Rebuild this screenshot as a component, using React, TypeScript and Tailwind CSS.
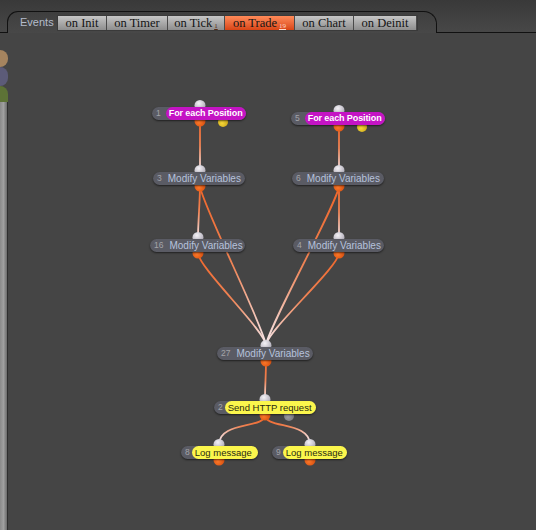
import React from "react";

type Kind = "gray" | "magenta" | "yellow";

interface FlowNode {
    id: string;
    label: string;
    kind: Kind;
    left: number;
    top: number;
    width: number;
    port: number; // x of in/out ports
    extra?: { x: number; color: "yellow" | "gray" };
}

// page coordinates, the canvas starts at (8, 33)
const OX = 8;
const OY = 33;
const H = 13;

const nodes: FlowNode[] = [
    { id: "1", label: "For each Position", kind: "magenta", left: 152, top: 107, width: 94, port: 200, extra: { x: 223, color: "yellow" } },
    { id: "5", label: "For each Position", kind: "magenta", left: 291, top: 112, width: 94, port: 339, extra: { x: 362, color: "yellow" } },
    { id: "3", label: "Modify Variables", kind: "gray", left: 153, top: 172, width: 92, port: 200 },
    { id: "6", label: "Modify Variables", kind: "gray", left: 292, top: 172, width: 92, port: 339 },
    { id: "16", label: "Modify Variables", kind: "gray", left: 150, top: 239, width: 95, port: 198 },
    { id: "4", label: "Modify Variables", kind: "gray", left: 293, top: 239, width: 91, port: 339 },
    { id: "27", label: "Modify Variables", kind: "gray", left: 217, top: 347, width: 96, port: 266 },
    { id: "2", label: "Send HTTP request", kind: "yellow", left: 214, top: 401, width: 102, port: 265, extra: { x: 289, color: "gray" } },
    { id: "8", label: "Log message", kind: "yellow", left: 181, top: 446, width: 77, port: 219 },
    { id: "9", label: "Log message", kind: "yellow", left: 272, top: 446, width: 75, port: 310 },
];

const links: [string, string][] = [
    ["1", "3"],
    ["3", "16"],
    ["3", "27"],
    ["16", "27"],
    ["5", "6"],
    ["6", "4"],
    ["6", "27"],
    ["4", "27"],
    ["27", "2"],
    ["2", "8"],
    ["2", "9"],
];

const byId = (id: string) => nodes.find((n) => n.id === id)!;
const inY = (n: FlowNode) => n.top - 1.5;
const outY = (n: FlowNode) => n.top + H + 1;

const tabs = [
    { name: "on Init", w: 49 },
    { name: "on Timer", w: 61 },
    { name: "on Tick", w: 57, sub: "1" },
    { name: "on Trade", w: 70, sub: "19", active: true },
    { name: "on Chart", w: 59 },
    { name: "on Deinit", w: 63 },
];

const Wires: React.FC = () => (
    <svg className="absolute inset-0" width={528} height={497} viewBox={`${OX} ${OY} 528 497`}>
        <defs>
            <radialGradient id="pin-in" cx="0.4" cy="0.3" r="0.8">
                <stop offset="0" stopColor="#f4f2f6" />
                <stop offset="1" stopColor="#a29eac" />
            </radialGradient>
            <radialGradient id="pin-out" cx="0.4" cy="0.6" r="0.8">
                <stop offset="0" stopColor="#ff7a2a" />
                <stop offset="1" stopColor="#c84208" />
            </radialGradient>
            <radialGradient id="pin-yellow" cx="0.4" cy="0.6" r="0.8">
                <stop offset="0" stopColor="#f6d83a" />
                <stop offset="1" stopColor="#c09a10" />
            </radialGradient>
            <radialGradient id="pin-gray" cx="0.4" cy="0.6" r="0.8">
                <stop offset="0" stopColor="#9a9aa0" />
                <stop offset="1" stopColor="#6a6a70" />
            </radialGradient>
            {links.map(([a, b]) => {
                const s = byId(a);
                const t = byId(b);
                return (
                    <linearGradient
                        key={a + b}
                        id={`w-${a}-${b}`}
                        gradientUnits="userSpaceOnUse"
                        x1={s.port}
                        y1={outY(s)}
                        x2={t.port}
                        y2={inY(t)}
                    >
                        <stop offset="0" stopColor="#f0662a" />
                        <stop offset="0.5" stopColor="#ef8456" />
                        <stop offset="1" stopColor="#f6e8ec" />
                    </linearGradient>
                );
            })}
        </defs>

        {links.map(([a, b]) => {
            const s = byId(a);
            const t = byId(b);
            const x1 = s.port;
            const y1 = outY(s);
            const x2 = t.port;
            const y2 = inY(t);
            let d = `M${x1},${y1} C${x1},${y1 + 14} ${x2},${y2 - 14} ${x2},${y2}`;
            if (a === "2") {
                // short fan-out to the log nodes
                d = `M${x1},${y1} C${x1},${y1 + 14} ${x2},${y1 + 6} ${x2},${y2}`;
            }
            return <path key={a + b} d={d} fill="none" stroke={`url(#w-${a}-${b})`} strokeWidth={1.8} />;
        })}

        {nodes.map((n) => (
            <g key={n.id}>
                <circle cx={n.port} cy={inY(n)} r={5.5} fill="url(#pin-in)" />
                <circle cx={n.port} cy={outY(n)} r={5.5} fill="url(#pin-out)" />
                {n.extra && (
                    <circle
                        cx={n.extra.x}
                        cy={outY(n) + 1}
                        r={5}
                        fill={n.extra.color === "yellow" ? "url(#pin-yellow)" : "url(#pin-gray)"}
                    />
                )}
            </g>
        ))}
    </svg>
);

const NodePill: React.FC<{ node: FlowNode }> = ({ node }) => {
    const labelClass =
        node.kind === "magenta"
            ? "bg-[#c414c4] text-white font-bold text-[9px] tracking-[-0.1px] rounded-full px-[3px]"
            : node.kind === "yellow"
            ? "bg-[#fbf64c] text-[#2a2a10] text-[9.5px] rounded-full px-[3px]"
            : "text-[#b6c2dc] text-[10px] pl-[4px]";
    return (
        <div
            className="absolute flex items-stretch h-[13px] rounded-full bg-[#5a5b64] shadow-[0_1px_2px_rgba(0,0,0,0.55)] font-['Liberation_Sans',sans-serif] leading-[13px] whitespace-nowrap"
            style={{ left: node.left - OX, top: node.top - OY, width: node.width }}
        >
            <span className={`pl-[4px] text-[8.5px] text-[#a4a4a8] ${node.kind === "magenta" ? "pr-[5px]" : "pr-[2px]"}`}>
                {node.id}
            </span>
            <span className={`flex-1 ${labelClass}`}>{node.label}</span>
        </div>
    );
};

const App: React.FC = () => {
    return (
        <div className="w-[536px] h-[530px] overflow-hidden bg-[#454545] flex flex-col">
            {/* header with the events tab */}
            <div className="h-[33px] flex items-end bg-gradient-to-b from-[#393939] to-[#484848] shrink-0">
                <div className="w-[7px] border-b border-[#111]" />
                <div className="w-[430px] h-[22px] border border-b-0 border-[#111] rounded-tl-[11px] rounded-tr-[13px] flex items-start pt-[3px] pl-[12px]">
                    <span className="w-[37px] text-[11px] leading-[14px] text-[#b4bccb] font-['Liberation_Sans',sans-serif]">
                        Events
                    </span>
                    <div className="flex border border-[#3a3a3a]">
                        {tabs.map((t) => (
                            <div
                                key={t.name}
                                className={`h-[14px] flex items-center justify-center border-r border-[#4a4a4a] font-['Liberation_Serif',serif] text-[12.5px] leading-[12px] text-[#141414] ${
                                    t.active
                                        ? "bg-gradient-to-b from-[#ff8a58] to-[#d84414]"
                                        : "bg-gradient-to-b from-[#c6c6c6] to-[#8e8e8e]"
                                }`}
                                style={{ width: t.w }}
                            >
                                {t.name}
                                {t.sub && (
                                    <span
                                        className={`ml-[2px] mt-[6px] text-[7px] leading-[7px] underline ${
                                            t.active ? "text-[#ffd8c8]" : "text-[#5a2a10]"
                                        }`}
                                    >
                                        {t.sub}
                                    </span>
                                )}
                            </div>
                        ))}
                    </div>
                </div>
                <div className="flex-1 border-b border-[#111]" />
            </div>

            <div className="flex-1 flex">
                {/* left strip */}
                <div className="w-[8px] flex flex-col pt-[17px]">
                    <div className="w-[16px] h-[17px] -ml-[8px] rounded-full bg-[#a5845f]" />
                    <div className="w-[16px] h-[19px] -ml-[8px] rounded-full bg-[#5c5b78]" />
                    <div className="w-[16px] h-[16px] -ml-[8px] rounded-t-full bg-[#5d7236]" />
                    <div className="flex-1 bg-gradient-to-r from-[#8a8a8a] via-[#a0a0a0] to-[#6c6c6c] border-r border-[#2e2e2e]" />
                </div>

                {/* flow canvas */}
                <div className="relative flex-1">
                    <Wires />
                    {nodes.map((n) => (
                        <NodePill key={n.id} node={n} />
                    ))}
                </div>
            </div>
        </div>
    );
};

export default App;
